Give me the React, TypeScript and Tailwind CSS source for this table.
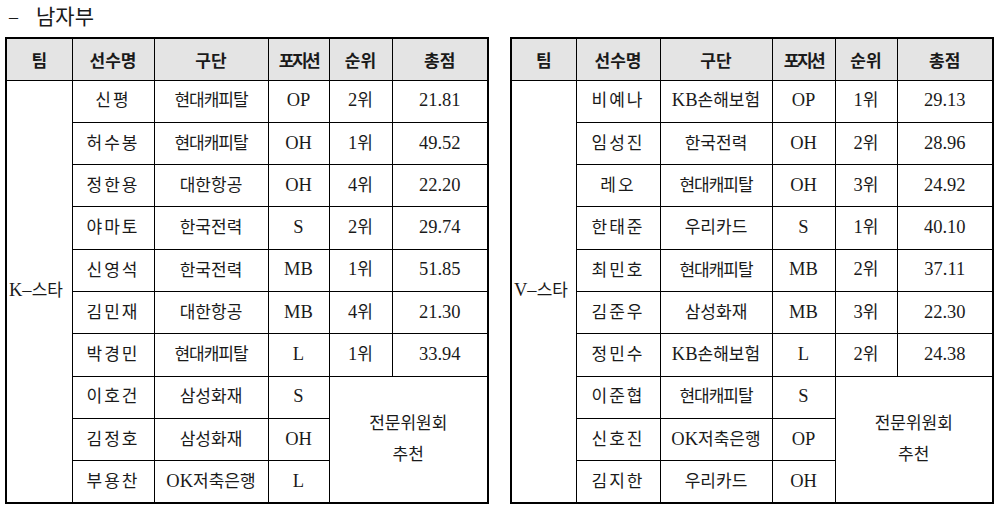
import React from "react";

type Row = { name: string; club: string; pos: string; rank?: string; score?: string };

const left: Row[] = [
  { name: "신평", club: "현대캐피탈", pos: "OP", rank: "2위", score: "21.81" },
  { name: "허수봉", club: "현대캐피탈", pos: "OH", rank: "1위", score: "49.52" },
  { name: "정한용", club: "대한항공", pos: "OH", rank: "4위", score: "22.20" },
  { name: "야마토", club: "한국전력", pos: "S", rank: "2위", score: "29.74" },
  { name: "신영석", club: "한국전력", pos: "MB", rank: "1위", score: "51.85" },
  { name: "김민재", club: "대한항공", pos: "MB", rank: "4위", score: "21.30" },
  { name: "박경민", club: "현대캐피탈", pos: "L", rank: "1위", score: "33.94" },
  { name: "이호건", club: "삼성화재", pos: "S" },
  { name: "김정호", club: "삼성화재", pos: "OH" },
  { name: "부용찬", club: "OK저축은행", pos: "L" },
];

const right: Row[] = [
  { name: "비예나", club: "KB손해보험", pos: "OP", rank: "1위", score: "29.13" },
  { name: "임성진", club: "한국전력", pos: "OH", rank: "2위", score: "28.96" },
  { name: "레오", club: "현대캐피탈", pos: "OH", rank: "3위", score: "24.92" },
  { name: "한태준", club: "우리카드", pos: "S", rank: "1위", score: "40.10" },
  { name: "최민호", club: "현대캐피탈", pos: "MB", rank: "2위", score: "37.11" },
  { name: "김준우", club: "삼성화재", pos: "MB", rank: "3위", score: "22.30" },
  { name: "정민수", club: "KB손해보험", pos: "L", rank: "2위", score: "24.38" },
  { name: "이준협", club: "현대캐피탈", pos: "S" },
  { name: "신호진", club: "OK저축은행", pos: "OP" },
  { name: "김지한", club: "우리카드", pos: "OH" },
];

const td = "border border-black text-center align-middle p-0";

function T({ s }: { s: string }) {
  const parts = s.match(/[\x00-\x7F\u2013]+|[^\x00-\x7F\u2013]+/g) || [];
  return (
    <>
      {parts.map((p, i) =>
        /^[\x00-\x7F\u2013]+$/.test(p) ? (
          <span key={i} className="text-[18.5px] tracking-normal">
            {p}
          </span>
        ) : (
          <span key={i}>{p}</span>
        )
      )}
    </>
  );
}

function Table({ team, rows, widths }: { team: string; rows: Row[]; widths: number[] }) {
  return (
    <table className="border-collapse border-2 border-black table-fixed w-[482px]">
      <colgroup>
        {widths.map((w, i) => (
          <col key={i} style={{ width: w }} />
        ))}
      </colgroup>
      <thead>
        <tr className="h-[42px] bg-[#e4e4e4] font-bold text-[17px] font-['Noto_Sans_CJK_KR',sans-serif]">
          <th className={td}>팀</th>
          <th className={td}>선수명</th>
          <th className={td}>구단</th>
          <th className={`${td} tracking-[-2.5px]`}>포지션</th>
          <th className={td}>순위</th>
          <th className={td}>총점</th>
        </tr>
      </thead>
      <tbody>
        {rows.map((r, i) => (
          <tr key={i} className="h-[42.3px]">
            {i === 0 && (
              <td rowSpan={10} className={`${td} text-left pl-[2px]`}>
                <T s={team} />
              </td>
            )}
            <td className={`${td} tracking-[2px]`}>{r.name}</td>
            <td className={`${td} ${r.club === "현대캐피탈" ? "tracking-[-1px]" : "tracking-normal"}`}>
              <T s={r.club} />
            </td>
            <td className={td}>
              <T s={r.pos} />
            </td>
            {r.rank ? (
              <>
                <td className={td}>
                  <T s={r.rank} />
                </td>
                <td className={td}>
                  <T s={r.score ?? ""} />
                </td>
              </>
            ) : i === 7 ? (
              <td rowSpan={3} colSpan={2} className={`${td} leading-[31px]`}>
                전문위원회
                <br />
                추천
              </td>
            ) : null}
          </tr>
        ))}
      </tbody>
    </table>
  );
}

export default function App() {
  return (
    <div className="w-[1007px] h-[515px] bg-white text-[#1a1a1a] text-[17px] font-['Liberation_Serif','Noto_Sans_CJK_KR',serif] overflow-hidden">
      <div className="h-[37px] pl-[9px] flex items-center text-[21px] leading-[30px] pb-[4px]">
        <span className="text-[18px]">–</span>
        <span className="ml-[18px]">남자부</span>
      </div>
      <div className="flex gap-[21px] pl-[5px]">
        <Table team="K–스타" rows={left} widths={[66, 82, 114, 61, 63, 96]} />
        <Table team="V–스타" rows={right} widths={[65, 84, 112, 63, 62, 96]} />
      </div>
    </div>
  );
}
